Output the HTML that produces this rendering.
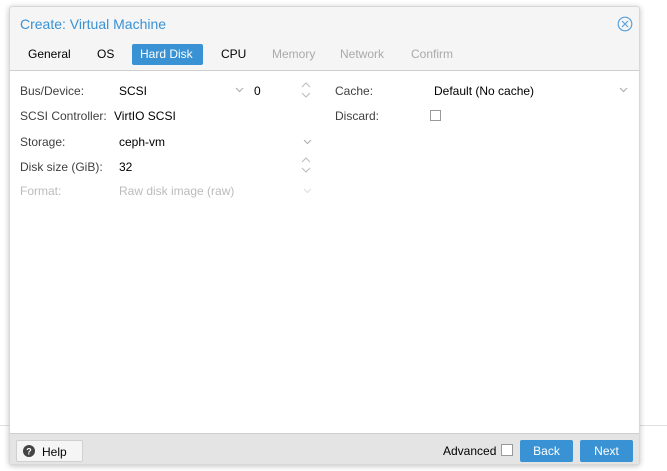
<!DOCTYPE html>
<html><head><meta charset="utf-8"><style>
*{box-sizing:border-box;margin:0;padding:0}
body{width:667px;height:471px;background:#fff;font-family:"Liberation Sans",sans-serif;font-size:12px;color:#000;position:relative;overflow:hidden}
.bgline{position:absolute;left:0;right:0;top:425px;height:1px;background:#e0e0e0}
.win{position:absolute;left:9px;top:6px;width:631px;height:459px;background:#f5f5f5;border:1px solid #d8d8d8;border-radius:3px;box-shadow:0 1px 6px rgba(0,0,0,.25);overflow:hidden}
.title{position:absolute;left:10px;top:9px;font-size:14px;color:#3892d4}
.close{position:absolute;left:607px;top:9px}
.tab{position:absolute;top:37px;height:21px;line-height:21px;padding:0 8px;font-size:12px}
.tab.dis{color:#aaa}
.tab.act{background:#3892d4;color:#fff;border-radius:2px}
.body{position:absolute;left:0;top:63px;width:629px;height:364px;background:#fff;border-top:1px solid #cfcfcf;border-bottom:1px solid #cfcfcf}
.lbl{position:absolute;color:#404040}
.val{position:absolute;color:#000}
.dis2{color:#bbb}
.foot{position:absolute;left:0;top:427px;width:629px;height:32px;background:#e4e4e4}
.btn{position:absolute;height:22px;line-height:22px;border-radius:2px;font-size:12px}
.cb{position:absolute;width:11px;height:11px;border:1px solid #999;background:#fff}
</style></head><body>
<div class="bgline"></div>
<div class="win">
 <div class="title">Create: Virtual Machine</div>
 <svg class="close" width="16" height="16" viewBox="0 0 16 16"><circle cx="8" cy="8" r="6.8" fill="none" stroke="#5aa0dc" stroke-width="1.2"/><path d="M5 5L11 11M11 5L5 11" stroke="#5aa0dc" stroke-width="1.2"/></svg>
 <div class="tab" style="left:10px">General</div>
 <div class="tab" style="left:79px">OS</div>
 <div class="tab act" style="left:122px;width:71px">Hard Disk</div>
 <div class="tab" style="left:203px">CPU</div>
 <div class="tab dis" style="left:254px">Memory</div>
 <div class="tab dis" style="left:322px">Network</div>
 <div class="tab dis" style="left:393px">Confirm</div>
 <div class="body">
  <div class="lbl" style="left:10px;top:13px">Bus/Device:</div>
  <div class="val" style="left:109px;top:13px">SCSI</div>
  <svg style="position:absolute;left:225px;top:16px" width="9" height="6"><path d="M1 1L4.5 4.5L8 1" fill="none" stroke="#aaa"/></svg>
  <div class="val" style="left:244px;top:13px">0</div>
  <svg style="position:absolute;left:291px;top:11px" width="10" height="16"><path d="M1 5L5 1L9 5M1 11L5 15L9 11" fill="none" stroke="#bbb"/></svg>
  <div class="lbl" style="left:10px;top:38px">SCSI Controller:</div>
  <div class="val" style="left:104px;top:38px">VirtIO SCSI</div>
  <div class="lbl" style="left:10px;top:64px">Storage:</div>
  <div class="val" style="left:109px;top:64px">ceph-vm</div>
  <svg style="position:absolute;left:293px;top:68px" width="9" height="6"><path d="M1 1L4.5 4.5L8 1" fill="none" stroke="#aaa"/></svg>
  <div class="lbl" style="left:10px;top:89px">Disk size (GiB):</div>
  <div class="val" style="left:109px;top:89px">32</div>
  <svg style="position:absolute;left:291px;top:86px" width="10" height="16"><path d="M1 5L5 1L9 5M1 11L5 15L9 11" fill="none" stroke="#bbb"/></svg>
  <div class="lbl dis2" style="left:10px;top:113px">Format:</div>
  <div class="val dis2" style="left:109px;top:113px">Raw disk image (raw)</div>
  <svg style="position:absolute;left:293px;top:117px" width="9" height="6"><path d="M1 1L4.5 4.5L8 1" fill="none" stroke="#ddd"/></svg>
  <div class="lbl" style="left:325px;top:13px">Cache:</div>
  <div class="val" style="left:424px;top:13px">Default (No cache)</div>
  <svg style="position:absolute;left:609px;top:16px" width="9" height="6"><path d="M1 1L4.5 4.5L8 1" fill="none" stroke="#aaa"/></svg>
  <div class="lbl" style="left:325px;top:38px">Discard:</div>
  <div class="cb" style="left:420px;top:39px"></div>
 </div>
 <div class="foot">
  <div class="btn" style="left:6px;top:6px;width:67px;background:#f5f5f5;border:1px solid #d0d0d0;padding-left:25px">Help</div>
  <svg style="position:absolute;left:13px;top:11px" width="12" height="12"><circle cx="6" cy="6" r="6" fill="#444"/><text x="6" y="9.5" font-size="9" font-weight="bold" fill="#fff" text-anchor="middle" font-family="Liberation Sans">?</text></svg>
  <div style="position:absolute;left:433px;top:10px">Advanced</div>
  <div class="cb" style="left:491px;top:10px;width:12px;height:12px"></div>
  <div class="btn" style="left:510px;top:6px;width:53px;background:#3892d4;color:#fff;text-align:center">Back</div>
  <div class="btn" style="left:570px;top:6px;width:53px;background:#3892d4;color:#fff;text-align:center">Next</div>
 </div>
</div>
</body></html>
